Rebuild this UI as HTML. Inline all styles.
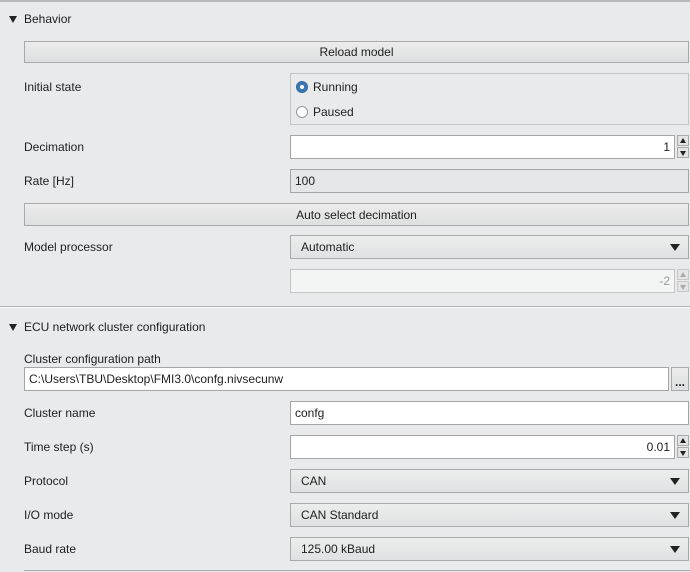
<!DOCTYPE html>
<html><head><meta charset="utf-8"><style>
*{box-sizing:border-box;margin:0;padding:0}
body{width:690px;height:572px;background:#e9eaeb;font-family:"Liberation Sans",sans-serif;font-size:12px;color:#1e1e1e;position:relative;overflow:hidden}
.a{position:absolute}
.lbl{position:absolute;left:24px;line-height:14px}
.hdr{position:absolute;left:24px;line-height:14px}
.tri{position:absolute;left:9px;width:0;height:0;border-left:4.5px solid transparent;border-right:4.5px solid transparent;border-top:7px solid #222}
.btn{position:absolute;border:1px solid #a9a9a9;background:linear-gradient(#ececec,#dedfe0);text-align:center;line-height:20px}
.inp{position:absolute;border:1px solid #a5a5a5;background:#fff;line-height:23px;padding:0 4px}
.ro{background:#e4e6e8}
.dis{background:#f3f4f4;color:#999;border-color:#c4c4c4}
.cmb{position:absolute;border:1px solid #a9a9a9;background:linear-gradient(#eceded,#e0e1e2);line-height:23px;padding:0 10px}
.cmb:after{content:"";position:absolute;right:8px;top:8px;border-left:5px solid transparent;border-right:5px solid transparent;border-top:7px solid #222}
.sp{position:absolute;width:12px;height:11px;border:1px solid #a9a9a9;background:#e4e4e4}
.up:after,.dn:after{content:"";position:absolute;left:2px;border-left:3.5px solid transparent;border-right:3.5px solid transparent}
.up:after{top:2px;border-bottom:5px solid #222}
.dn:after{top:3px;border-top:5px solid #222}
.sp.d{border-color:#c8c8c8}
.sp.d:after{border-bottom-color:#aaa;border-top-color:#aaa}
.r{text-align:right}
</style></head><body>
<div class="a" style="left:0;top:0;width:690px;height:2px;background:#b8b8b8"></div>
<div class="tri" style="top:16px"></div>
<div class="hdr" style="top:12px">Behavior</div>
<div class="btn" style="left:24px;top:41px;width:665px;height:22px">Reload model</div>
<div class="lbl" style="top:80px">Initial state</div>
<div class="a" style="left:290px;top:73px;width:399px;height:52px;border:1px solid #c4c4c4"></div>
<div class="a" style="left:296px;top:81px;width:12px;height:12px;border-radius:50%;background:#3a78b5;border:1px solid #2f6aa3"></div>
<div class="a" style="left:300px;top:85px;width:4px;height:4px;border-radius:50%;background:#fff"></div>
<div class="a" style="left:313px;top:80px">Running</div>
<div class="a" style="left:296px;top:106px;width:12px;height:12px;border-radius:50%;background:#fff;border:1px solid #999"></div>
<div class="a" style="left:313px;top:105px">Paused</div>
<div class="lbl" style="top:140px">Decimation</div>
<div class="inp r" style="left:290px;top:135px;width:385px;height:24px">1</div>
<div class="sp up" style="left:677px;top:135px"></div>
<div class="sp dn" style="left:677px;top:147px"></div>
<div class="lbl" style="top:174px">Rate [Hz]</div>
<div class="inp ro" style="left:290px;top:169px;width:399px;height:24px">100</div>
<div class="btn" style="left:24px;top:203px;width:665px;height:23px;line-height:22px">Auto select decimation</div>
<div class="lbl" style="top:240px">Model processor</div>
<div class="cmb" style="left:290px;top:235px;width:399px;height:24px">Automatic</div>
<div class="inp r dis" style="left:290px;top:269px;width:385px;height:24px">-2</div>
<div class="sp up d" style="left:677px;top:269px"></div>
<div class="sp dn d" style="left:677px;top:281px"></div>
<div class="a" style="left:0;top:306px;width:690px;height:1px;background:#b4b4b4"></div>
<div class="a" style="left:0;top:307px;width:690px;height:1px;background:#fafafa"></div>
<div class="tri" style="top:324px"></div>
<div class="hdr" style="top:320px">ECU network cluster configuration</div>
<div class="lbl" style="top:352px">Cluster configuration path</div>
<div class="inp" style="left:24px;top:367px;width:645px;height:24px">C:\Users\TBU\Desktop\FMI3.0\confg.nivsecunw</div>
<div class="btn" style="left:671px;top:367px;width:18px;height:24px;line-height:28px;font-weight:bold">...</div>
<div class="lbl" style="top:406px">Cluster name</div>
<div class="inp" style="left:290px;top:401px;width:399px;height:24px">confg</div>
<div class="lbl" style="top:440px">Time step (s)</div>
<div class="inp r" style="left:290px;top:435px;width:385px;height:24px">0.01</div>
<div class="sp up" style="left:677px;top:435px"></div>
<div class="sp dn" style="left:677px;top:447px"></div>
<div class="lbl" style="top:474px">Protocol</div>
<div class="cmb" style="left:290px;top:469px;width:399px;height:24px">CAN</div>
<div class="lbl" style="top:508px">I/O mode</div>
<div class="cmb" style="left:290px;top:503px;width:399px;height:24px">CAN Standard</div>
<div class="lbl" style="top:542px">Baud rate</div>
<div class="cmb" style="left:290px;top:537px;width:399px;height:24px">125.00 kBaud</div>
<div class="a" style="left:24px;top:570px;width:666px;height:1px;background:#a9a9a9"></div>
</body></html>
